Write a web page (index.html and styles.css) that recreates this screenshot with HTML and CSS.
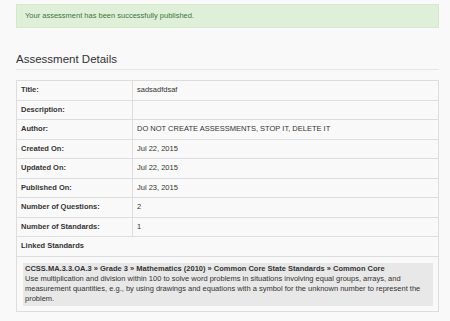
FILE: index.html
```html
<!DOCTYPE html>
<html lang="en">
<head>
	<meta charset="UTF-8">
	<meta name="viewport" content="width=device-width, initial-scale=1.0">
	<title>Assessment Details</title>
	<link rel="stylesheet" href="styles.css">
</head>
<body>
	<div class="page">
		<div class="alert">Your assessment has been successfully published.</div>
		<h3 class="page-header">Assessment Details</h3>
		<table class="details">
			<tr><th>Title:</th><td>sadsadfdsaf</td></tr>
			<tr><th>Description:</th><td></td></tr>
			<tr><th>Author:</th><td>DO NOT CREATE ASSESSMENTS, STOP IT, DELETE IT</td></tr>
			<tr><th>Created On:</th><td>Jul 22, 2015</td></tr>
			<tr><th>Updated On:</th><td>Jul 22, 2015</td></tr>
			<tr><th>Published On:</th><td>Jul 23, 2015</td></tr>
			<tr><th>Number of Questions:</th><td>2</td></tr>
			<tr><th>Number of Standards:</th><td>1</td></tr>
			<tr><th colspan="2">Linked Standards</th></tr>
			<tr>
				<td colspan="2" class="standards">
					<div class="standard">
						<b>CCSS.MA.3.3.OA.3 &raquo; Grade 3 &raquo; Mathematics (2010) &raquo; Common Core State Standards &raquo; Common Core</b><br>
						Use multiplication and division within 100 to solve word problems in situations involving equal groups, arrays, and measurement quantities, e.g., by using drawings and equations with a symbol for the unknown number to represent the problem.
					</div>
				</td>
			</tr>
		</table>
	</div>
</body>
</html>
```

FILE: styles.css
```css
html, body {
	margin: 0;
	padding: 0;
}
body {
	background-color: #f9f9f9;
	font-family: "Liberation Sans", Arial, sans-serif;
	font-size: 7.5px;
	color: #333;
}
* {
	box-sizing: border-box;
}
.page {
	padding: 4px 11px 0 16px;
}
.alert {
	background-color: #dff0d8;
	border: 1px solid #d6e9c6;
	color: #3c763d;
	padding: 6px 8px;
	line-height: 10px;
}
.page-header {
	margin: 24px 0 10px 0;
	padding-bottom: 3px;
	border-bottom: 1px solid #e6e6e6;
	font-size: 11.5px;
	line-height: 14px;
	font-weight: 400;
	color: #333;
}
.details {
	width: 100%;
	border-collapse: collapse;
	border: 1px solid #ddd;
}
.details th, .details td {
	border: 1px solid #ddd;
	padding: 4px;
	line-height: 10.5px;
	text-align: left;
	vertical-align: top;
}
.details th {
	width: 116px;
	font-weight: bold;
}
.details td.standards {
	padding: 6px 5px 5px 6px;
}
.standard {
	background-color: #e8e8e8;
	padding: 1px 2px 2px 2px;
	line-height: 10px;
}
```
